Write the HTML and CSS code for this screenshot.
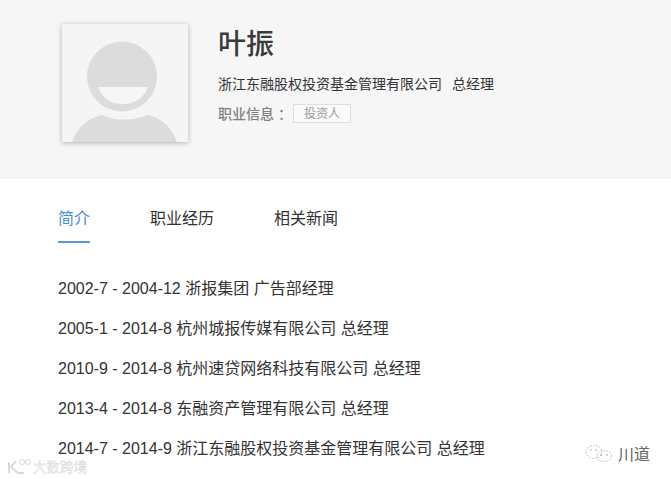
FILE: index.html
```html
<!DOCTYPE html>
<html lang="zh">
<head>
<meta charset="utf-8">
<title>叶振</title>
<link rel="stylesheet" href="styles.css">
</head>
<body>
<header class="hero">
  <div class="avatar">
    <svg class="avatar-art" viewBox="0 0 126 118" width="126" height="118" aria-hidden="true">
      <circle cx="60" cy="52.5" r="35" fill="#dcdcdc"/>
      <path d="M36 63 H86 C82 74 72 80 61 80 C49 80 40 74 36 63 Z" fill="#f6f6f6"/>
      <path d="M10 118 C15 103 26 94 40 91 C53 97 70 97 86 91 C99 94 110 103 115 118 Z" fill="#dcdcdc"/>
    </svg>
  </div>
  <div class="info">
    <h1 class="name">叶振</h1>
    <p class="role"><span>浙江东融股权投资基金管理有限公司</span><span>总经理</span></p>
    <p class="tags"><span class="tags-label">职业信息<span class="colon">：</span></span><span class="tag">投资人</span></p>
  </div>
</header>
<main class="content">
  <nav class="tabs">
    <a class="tab tab-active">简介</a>
    <a class="tab">职业经历</a>
    <a class="tab">相关新闻</a>
  </nav>
  <ul class="career">
    <li>2002-7 - 2004-12 浙报集团 广告部经理</li>
    <li>2005-1 - 2014-8 杭州城报传媒有限公司 总经理</li>
    <li>2010-9 - 2014-8 杭州速贷网络科技有限公司 总经理</li>
    <li>2013-4 - 2014-8 东融资产管理有限公司 总经理</li>
    <li>2014-7 - 2014-9 浙江东融股权投资基金管理有限公司 总经理</li>
  </ul>
</main>
<div class="mark-left">
  <svg viewBox="0 0 25 16" width="25" height="16" aria-hidden="true">
    <path d="M2 4 V15 M9 3 L4 9 L11 15 H17" fill="none" stroke="#d8d8d8" stroke-width="1.8"/>
    <circle cx="15" cy="4" r="2.6" fill="none" stroke="#dcdcdc"/>
    <circle cx="21" cy="4" r="2.6" fill="none" stroke="#dcdcdc"/>
  </svg>
  <span>大数跨境</span>
</div>
<div class="mark-right">
  <svg viewBox="0 0 27 17" width="27" height="17" aria-hidden="true">
    <g fill="none" stroke="#b8b8b8" stroke-width="1" stroke-dasharray="1.5 1.5">
      <ellipse cx="9" cy="7" rx="8" ry="6.5"/>
      <ellipse cx="19" cy="11" rx="7.5" ry="5.5"/>
    </g>
    <circle cx="6" cy="5" r=".8" fill="#aaa"/>
    <circle cx="11" cy="5" r=".8" fill="#aaa"/>
    <circle cx="16" cy="10" r=".8" fill="#999"/>
    <circle cx="22" cy="10" r=".8" fill="#999"/>
  </svg>
  <span class="mark-name">川道</span>
</div>
</body>
</html>
```
FILE: styles.css
```css
* { box-sizing: border-box; }
html, body { margin: 0; padding: 0; }
body {
  width: 671px;
  height: 479px;
  overflow: hidden;
  position: relative;
  background: #fff;
  color: #333;
  font-family: "Liberation Sans", "Noto Sans CJK SC", sans-serif;
}
.hero {
  height: 179px;
  background: #f6f6f6;
  display: flex;
  padding: 24px 0 0 62px;
  gap: 30px;
}
.avatar {
  width: 126px;
  height: 118px;
  background: #f5f5f5;
  box-shadow: 0 1px 5px rgba(0,0,0,.28);
  flex: none;
}
.avatar-art { display: block; }
.info { display: flex; flex-direction: column; }
.name {
  margin: 1px 0 0;
  height: 40px;
  font-size: 28px;
  line-height: 40px;
  font-weight: 500;
  color: #3a3a3a;
}
.role {
  margin: 9px 0 0;
  font-size: 14px;
  line-height: 20px;
  color: #333;
  display: flex;
  gap: 10px;
}
.tags {
  margin: 9px 0 0;
  display: flex;
  align-items: center;
  height: 20px;
}
.tags-label {
  font-size: 14px;
  font-weight: 500;
  color: #808080;
  width: 75px;
  white-space: nowrap;
}
.colon {
  font-family: "Noto Sans CJK TC", sans-serif;
  margin-left: 4px;
}
.tag {
  width: 58px;
  height: 19px;
  border: 1px solid #ddd;
  background: #fafafa;
  font-size: 12px;
  line-height: 18px;
  text-align: center;
  color: #999;
}
.content { padding: 29px 0 0 58px; }
.tabs { display: flex; gap: 60px; }
.tab {
  height: 35px;
  font-size: 16px;
  line-height: 22px;
  color: #333;
}
.tab-active {
  color: #4a90c8;
  border-bottom: 2px solid #5a9bc9;
}
.career {
  list-style: none;
  margin: 34px 0 0;
  padding: 0;
}
.career li {
  font-size: 16px;
  line-height: 24px;
  height: 40px;
  color: #333;
}
.mark-left {
  position: absolute;
  left: 7px;
  top: 456px;
  display: flex;
  align-items: center;
  gap: 1px;
  font-size: 13.5px;
  color: #f0f0f0;
  -webkit-text-stroke: .3px #d4d4d4;
}
.mark-right {
  position: absolute;
  left: 585px;
  top: 441px;
  display: flex;
  align-items: center;
  gap: 6px;
  font-size: 16px;
  color: #666;
}
.mark-name { white-space: nowrap; }
```
